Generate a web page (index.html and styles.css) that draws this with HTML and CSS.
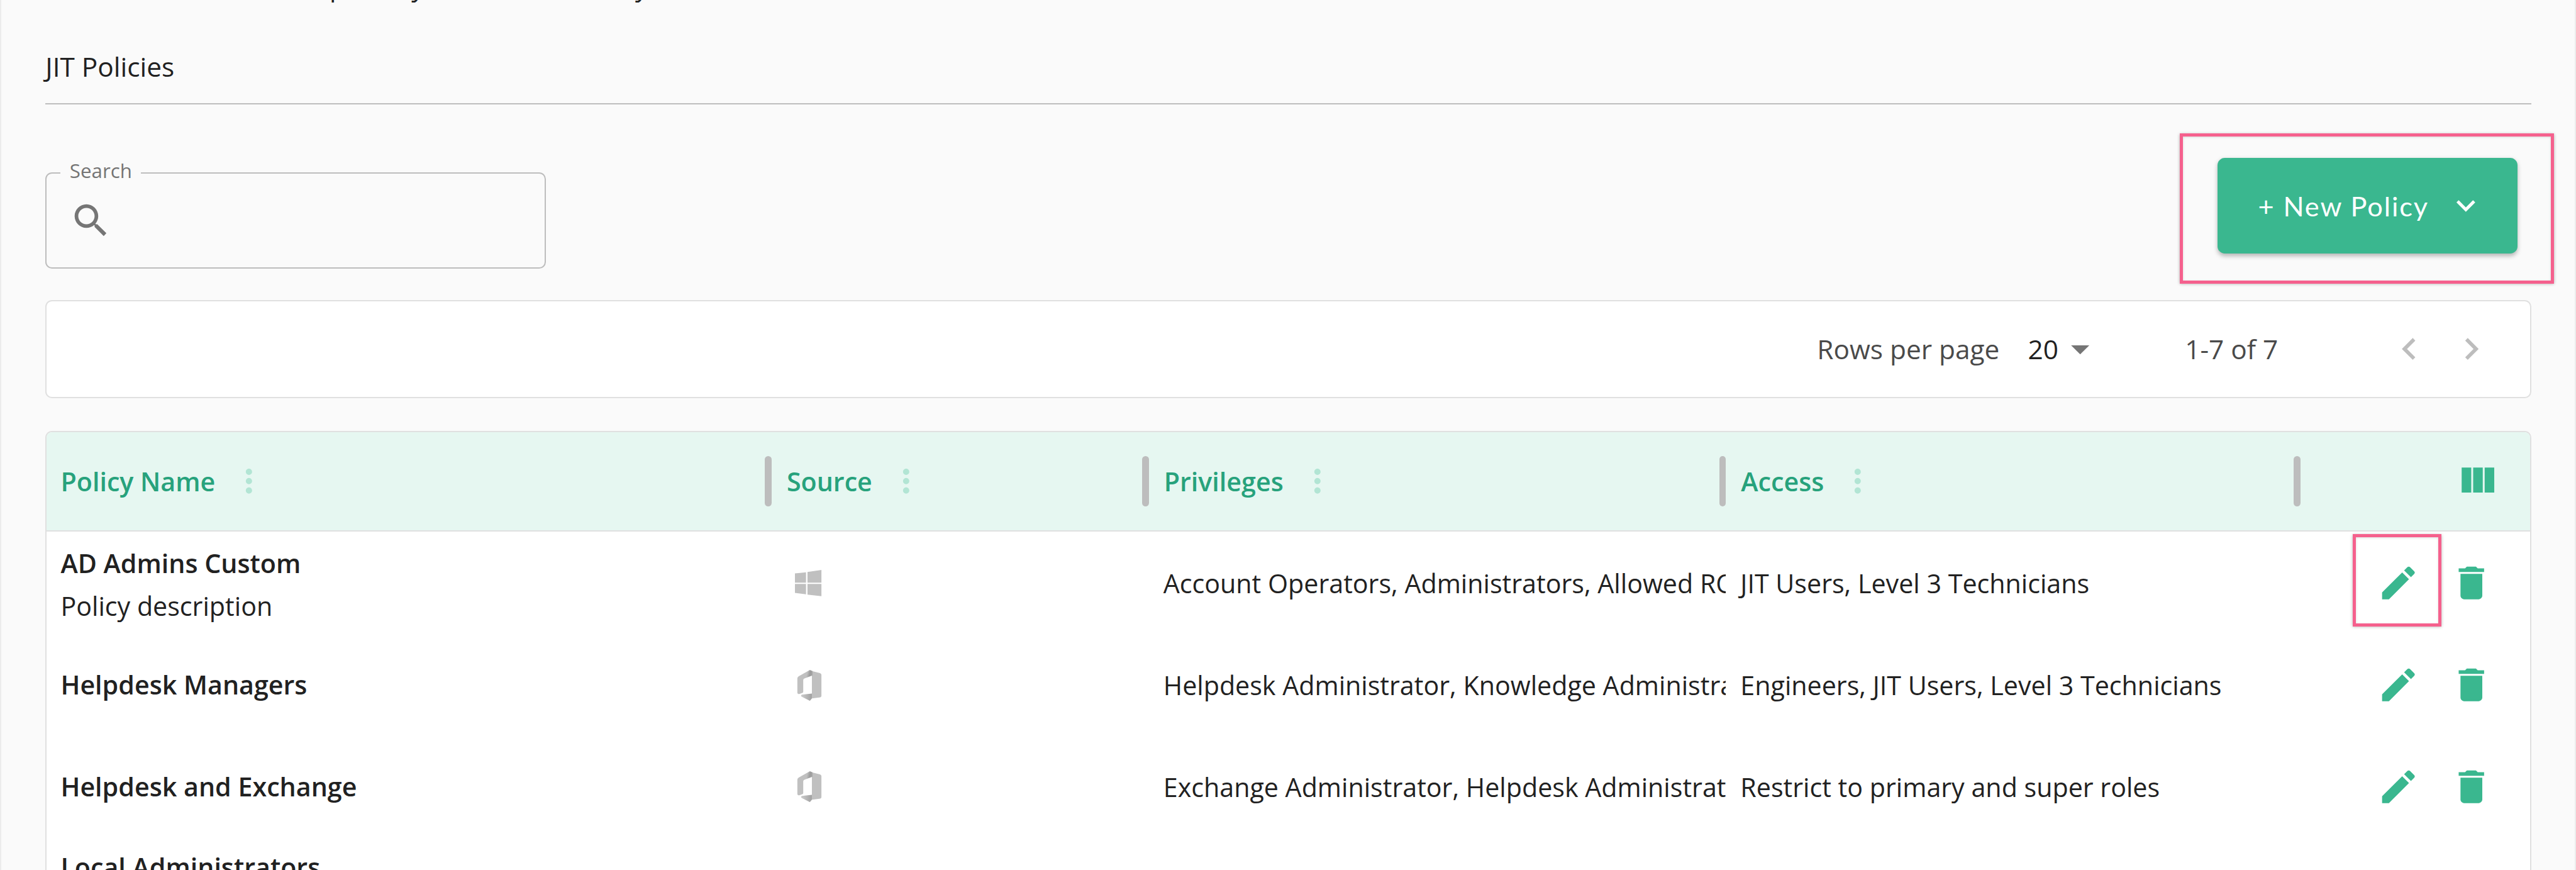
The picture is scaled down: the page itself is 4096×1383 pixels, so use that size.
FILE: index.html
```html
<!DOCTYPE html>
<html lang="en">
<head>
<meta charset="utf-8">
<title>JIT Policies</title>
<link rel="stylesheet" href="styles.css">
</head>
<body>
<svg class="defs" width="0" height="0" aria-hidden="true">
  <defs>
    <linearGradient id="of-top" x1="0" y1="0" x2="1" y2="0.3">
      <stop offset="0.62" stop-color="#c0c0c0"/>
      <stop offset="0.8" stop-color="#9c9c9c"/>
      <stop offset="1" stop-color="#a8a8a8"/>
    </linearGradient>
    <linearGradient id="of-bottom" x1="0" y1="0" x2="1" y2="0">
      <stop offset="0.1" stop-color="#c8c8c8"/>
      <stop offset="1" stop-color="#a0a0a0"/>
    </linearGradient>
    <symbol id="i-edit" viewBox="0 0 24 24"><path d="M3 17.25V21h3.75L17.81 9.94l-3.75-3.75L3 17.25zM20.71 7.04c.39-.39.39-1.02 0-1.41l-2.34-2.34c-.39-.39-1.02-.39-1.41 0l-1.83 1.83 3.75 3.75 1.83-1.83z"/></symbol>
    <symbol id="i-delete" viewBox="0 0 24 24"><path d="M6 19c0 1.1.9 2 2 2h8c1.1 0 2-.9 2-2V7H6v12zM19 4h-3.5l-1-1h-5l-1 1H5v2h14V4z"/></symbol>
    <symbol id="i-more" viewBox="0 0 24 24"><path d="M12 8c1.1 0 2-.9 2-2s-.9-2-2-2-2 .9-2 2 .9 2 2 2zm0 2c-1.1 0-2 .9-2 2s.9 2 2 2 2-.9 2-2-.9-2-2-2zm0 6c-1.1 0-2 .9-2 2s.9 2 2 2 2-.9 2-2-.9-2-2-2z"/></symbol>
    <symbol id="i-windows" viewBox="0 0 44 44"><path d="M0 5.7 18.3 4v17H0zM20.7 3.3 44 0v21H20.7zM0 23h18.3v17.3L0 38zM20.7 23H44v20.3l-23.3-2.6z"/></symbol>
    <symbol id="i-office" viewBox="0 0 44 51">
      <path fill="#c0c0c0" d="M28 1.700 40.300 5q3.700 1 3.700 4v33q0 3-3.700 3.400L28 47z"/>
      <path fill="url(#of-top)" d="M24.700 0 29 1.700V9L15.700 14q-2 .8-2 3v19q0 1.500-1.500 2l-5 1.700Q4 40.500 4 37V14q0-2.500 2.300-3.700z"/>
      <path fill="url(#of-bottom)" d="M11.300 40.700 28 39v8l-3.300 4-13-6.500q-3-1.700-.4-3.800z"/>
    </symbol>
  </defs>
</svg>

<div class="page">
  <p class="intro">Select the admin roles primary, and all else ready</p>

  <h1 class="title">JIT Policies</h1>

  <div class="controls">
    <div class="search">
      <span class="search-label">Search</span>
      <svg class="search-icon" viewBox="0 0 24 24"><path d="M15.500 14h-.79l-.28-.27C15.410 12.590 16 11.110 16 9.500 16 5.910 13.090 3 9.500 3S3 5.910 3 9.500 5.910 16 9.500 16c1.610 0 3.090-.59 4.230-1.570l.27.28v.79l5 4.990L20.490 19l-4.990-5zm-6 0C7.010 14 5 11.990 5 9.500S7.010 5 9.500 5 14 7.010 14 9.500 11.990 14 9.500 14z"/></svg>
    </div>
    <div class="new-policy">
      <button class="new-policy-btn" type="button">
        <span>+ New Policy</span>
        <svg class="btn-chevron" viewBox="0 0 24 24"><path d="M16.590 8.590 12 13.170 7.410 8.590 6 10l6 6 6-6z"/></svg>
      </button>
      <span class="callout callout-btn"></span>
    </div>
  </div>

  <div class="pager">
    <span class="pager-label">Rows per page</span>
    <span class="pager-value">20</span>
    <svg class="pager-drop" viewBox="0 0 24 24"><path d="M7 10l5 5 5-5z"/></svg>
    <span class="pager-range">1-7 of 7</span>
    <svg class="pager-nav" viewBox="0 0 24 24"><path d="M15.410 7.410 14 6l-6 6 6 6 1.410-1.410L10.830 12z"/></svg>
    <svg class="pager-nav" viewBox="0 0 24 24"><path d="M10 6 8.590 7.410 13.170 12l-4.580 4.590L10 18l6-6z"/></svg>
  </div>

  <div class="table">
    <div class="row head">
      <div class="hcell hcell-first"><span class="hlabel">Policy Name</span><svg class="hmore"><use href="#i-more"/></svg><span class="hsep"></span></div>
      <div class="hcell"><span class="hlabel">Source</span><svg class="hmore"><use href="#i-more"/></svg><span class="hsep"></span></div>
      <div class="hcell"><span class="hlabel">Privileges</span><svg class="hmore"><use href="#i-more"/></svg><span class="hsep"></span></div>
      <div class="hcell"><span class="hlabel">Access</span><svg class="hmore"><use href="#i-more"/></svg><span class="hsep"></span></div>
      <div class="hcell hcell-end"><svg class="hcols" viewBox="0 0 24 24"><path d="M10 18h5V5h-5v13zm-6 0h5V5H4v13zM16 5v13h5V5h-5z"/></svg></div>
    </div>

    <div class="row body first">
      <div class="cell name-cell"><span class="name">AD Admins Custom</span><span class="desc">Policy description</span></div>
      <div class="cell"><svg class="source-icon"><use href="#i-windows"/></svg></div>
      <div class="cell">Account Operators, Administrators, Allowed RODC Password Replication Group</div>
      <div class="cell">JIT Users, Level 3 Technicians</div>
      <div class="cell actions">
        <svg class="action"><use href="#i-edit"/></svg>
        <svg class="action delete"><use href="#i-delete"/></svg>
        <span class="callout callout-edit"></span>
      </div>
    </div>

    <div class="row body">
      <div class="cell name-cell"><span class="name">Helpdesk Managers</span></div>
      <div class="cell"><svg class="source-icon office"><use href="#i-office"/></svg></div>
      <div class="cell">Helpdesk Administrator, Knowledge Administrator</div>
      <div class="cell">Engineers, JIT Users, Level 3 Technicians</div>
      <div class="cell actions">
        <svg class="action"><use href="#i-edit"/></svg>
        <svg class="action delete"><use href="#i-delete"/></svg>
      </div>
    </div>

    <div class="row body">
      <div class="cell name-cell"><span class="name">Helpdesk and Exchange</span></div>
      <div class="cell"><svg class="source-icon office"><use href="#i-office"/></svg></div>
      <div class="cell">Exchange Administrator, Helpdesk Administrator</div>
      <div class="cell">Restrict to primary and super roles</div>
      <div class="cell actions">
        <svg class="action"><use href="#i-edit"/></svg>
        <svg class="action delete"><use href="#i-delete"/></svg>
      </div>
    </div>

    <div class="row body">
      <div class="cell name-cell"><span class="name">Local Administrators</span><span class="desc">Policy description</span></div>
    </div>
  </div>
</div>
</body>
</html>
```

FILE: styles.css
```css
html, body {
  margin: 0;
  padding: 0;
  width: 100%;
  height: 100%;
  overflow: hidden;
  background: #fafafa;
}

.defs {
  position: absolute;
}

.page {
  zoom: 0.96286;
  box-sizing: border-box;
  width: 4254px;
  height: 1436px;
  overflow: hidden;
  padding: 0 72px 0 73px;
  border-left: 3px solid #ececec;
  border-right: 3px solid #ececec;
  font-family: "Open Sans", "Noto Sans", sans-serif;
  font-size: 42.8px;
  color: #212121;
  background: #fafafa;
}

.intro {
  margin: -52px 0 0;
  padding-left: 16px;
  line-height: 60px;
  white-space: nowrap;
  font-weight: 500;
}

.title {
  margin: 72px 0 0;
  padding-bottom: 30px;
  border-bottom: 3px solid #bdbdbd;
  font-size: 44px;
  line-height: 60px;
  font-weight: 500;
}

.controls {
  display: flex;
  justify-content: space-between;
  align-items: flex-start;
  margin-top: 89px;
  height: 182px;
  padding-right: 23px;
}

.search {
  position: relative;
  box-sizing: border-box;
  display: flex;
  align-items: center;
  width: 826px;
  height: 158px;
  margin-top: 24px;
  padding-left: 37px;
  border: 3px solid #bdbdbd;
  border-radius: 11px;
}

.search-label {
  position: absolute;
  top: -26px;
  left: 23px;
  padding: 0 15px;
  background: #fafafa;
  font-size: 32.5px;
  line-height: 42px;
  color: #757575;
}

.search-icon {
  width: 72px;
  height: 72px;
  fill: #757575;
}

.new-policy {
  position: relative;
  width: 495px;
  height: 157px;
}

.new-policy-btn {
  box-sizing: border-box;
  display: flex;
  align-items: center;
  width: 100%;
  height: 100%;
  padding: 0 0 0 67px;
  border: 0;
  border-radius: 12px;
  background: #3ab78f;
  box-shadow: 0 4px 8px rgba(0, 0, 0, 0.28);
  color: #fff;
  font-family: "Lato", "Open Sans", sans-serif;
  font-size: 45px;
  letter-spacing: 2px;
}

.btn-chevron {
  width: 62px;
  height: 62px;
  margin-left: 30px;
  fill: #fff;
}

.callout {
  position: absolute;
  box-sizing: border-box;
  border: 6px solid #f5608d;
  box-shadow: 0 1px 5px rgba(0, 0, 0, 0.3), inset 0 1px 4px rgba(0, 0, 0, 0.15);
  pointer-events: none;
}

.callout-btn {
  top: -41px;
  left: -62px;
  right: -61px;
  bottom: -50px;
}

.callout-edit {
  top: 4px;
  left: 86px;
  width: 147px;
  height: 152px;
}

.pager {
  box-sizing: border-box;
  display: flex;
  align-items: center;
  justify-content: flex-end;
  height: 162px;
  margin-top: 52px;
  padding-right: 61px;
  border: 3px solid #e0e0e0;
  border-radius: 11px;
  background: #fff;
  font-size: 44px;
  color: #4a4a4a;
}

.pager-value {
  margin-left: 47px;
  color: #212121;
}

.pager-drop {
  width: 72px;
  height: 72px;
  margin-right: 137px;
  fill: #757575;
}

.pager-range {
  margin-right: 181px;
}

.pager-nav {
  width: 72px;
  height: 72px;
  margin-left: 30px;
  fill: #bdbdbd;
}

.pager-range + .pager-nav {
  margin-left: 0;
}

.table {
  margin-top: 54px;
  border: 3px solid #e0e0e0;
  border-bottom: 0;
  border-radius: 11px 11px 0 0;
  background: #fff;
  overflow: hidden;
}

.row {
  display: grid;
  grid-template-columns: 1197px 623px 953px 949px 1fr;
}

.head {
  height: 165px;
  box-sizing: border-box;
  border-bottom: 3px solid #e0e0e0;
  background: #e6f7f1;
}

.hcell {
  display: flex;
  align-items: center;
  padding-left: 25px;
}

.hcell-first {
  padding-left: 23px;
}

.hlabel {
  font-weight: 600;
  color: #27a27c;
}

.hmore {
  width: 62px;
  height: 62px;
  margin-left: 25px;
  fill: #b2e5d4;
}

.hsep {
  width: 11px;
  height: 84px;
  margin-left: auto;
  border-radius: 6px;
  background: #bdbdbd;
}

.hcell-end {
  padding-left: 253px;
}

.hcols {
  width: 76px;
  height: 76px;
  fill: #3ab78f;
}

.body {
  height: 168px;
}

.first {
  height: 169px;
}

.cell {
  position: relative;
  display: flex;
  align-items: center;
  min-width: 0;
  padding-left: 24px;
  white-space: nowrap;
  overflow: hidden;
}

.name-cell {
  flex-direction: column;
  align-items: flex-start;
  justify-content: center;
  padding-left: 23px;
  line-height: 70px;
}

.first .name-cell {
  padding-top: 6px;
  box-sizing: border-box;
}

.name {
  font-weight: 600;
}

.source-icon {
  width: 44px;
  height: 44px;
  margin-left: 15px;
  fill: #c0c0c0;
}

.source-icon.office {
  height: 51px;
}

.actions {
  overflow: visible;
  padding-left: 126px;
}

.action {
  width: 72px;
  height: 72px;
  fill: #3ab78f;
}

.delete {
  margin-left: 48px;
}
```
